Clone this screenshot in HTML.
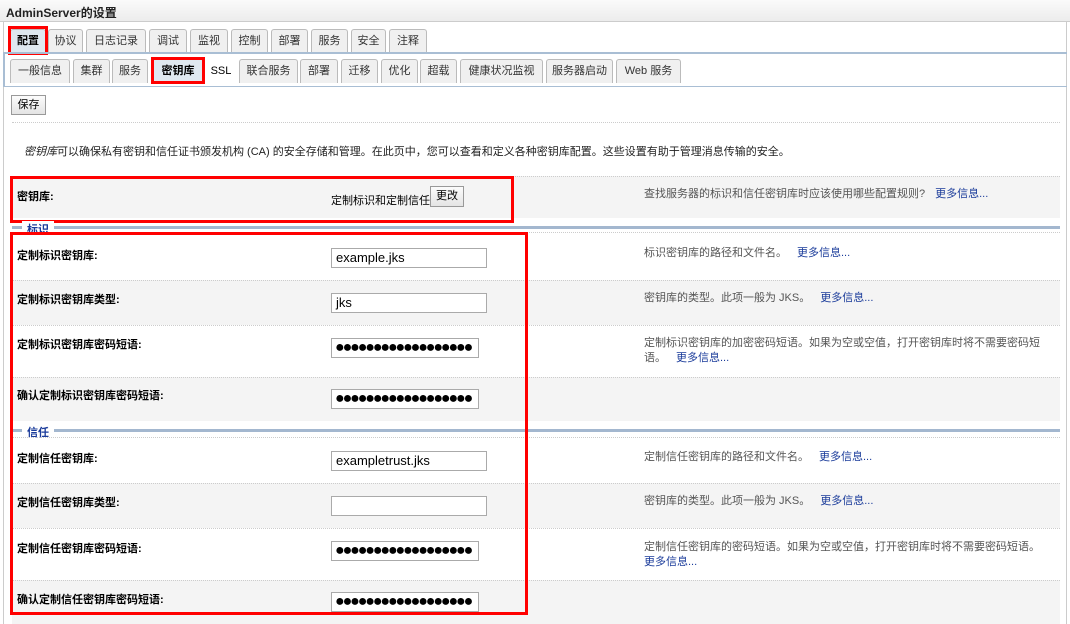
<!DOCTYPE html>
<html><head><meta charset="utf-8"><style>
*{margin:0;padding:0;box-sizing:border-box}
body{width:1070px;height:624px;overflow:hidden;background:#fff;font-family:"Liberation Sans","Noto Sans CJK SC",sans-serif;font-size:11px;color:#000;position:relative}
.a{position:absolute}
.title{left:0;top:0;width:1070px;height:22px;background:linear-gradient(#fafafa,#ececec);border-bottom:1px solid #ccc;font-weight:bold;font-size:12px;padding:4px 6px;color:#222}
.tab{position:absolute;height:24px;background:#f0f0f0;border:1px solid #bbb;border-bottom:none;border-radius:3px 3px 0 0;text-align:center;line-height:22px;font-size:11px;color:#333}
.sel{background:#dfe8f0;font-weight:bold;color:#000}
.red{position:absolute;border:3px solid #f00}
.row{position:absolute;left:12px;width:1048px;border-top:1px dotted #ccc}
.g{background:#f4f4f4}
.lbl{position:absolute;left:17px;font-weight:bold;font-size:11px}
.inp{position:absolute;left:331px;width:156px;height:20px;border:1px solid #aaa;background:#fff;font-size:13px;padding:1px 4px;line-height:16px;overflow:hidden;white-space:nowrap}
.pw{width:148px;font-size:16px;letter-spacing:-2.1px;padding:0 0 0 3px;line-height:18px}
.help{position:absolute;left:644px;color:#555;font-size:11px;line-height:15px;width:400px}
.help b{font-weight:normal;color:#1a3b9a;margin-left:10px}
.sec{position:absolute;left:12px;width:1048px;height:3px;background:#a3b7cf}
.sect{position:absolute;background:#fff;color:#1a3b9a;font-weight:bold;padding:0 5px;font-size:11px}
</style></head><body>
<div class="a title">AdminServer的设置</div>
<div class="a" style="left:3px;top:22px;width:1px;height:602px;background:#ccc"></div>
<div class="a" style="left:1066px;top:22px;width:1px;height:602px;background:#ccc"></div>

<div class="tab sel" style="left:10px;top:29px;width:36px">配置</div>
<div class="tab" style="left:48px;top:29px;width:35px">协议</div>
<div class="tab" style="left:86px;top:29px;width:60px">日志记录</div>
<div class="tab" style="left:149px;top:29px;width:38px">调试</div>
<div class="tab" style="left:190px;top:29px;width:38px">监视</div>
<div class="tab" style="left:231px;top:29px;width:37px">控制</div>
<div class="tab" style="left:271px;top:29px;width:37px">部署</div>
<div class="tab" style="left:311px;top:29px;width:37px">服务</div>
<div class="tab" style="left:351px;top:29px;width:35px">安全</div>
<div class="tab" style="left:389px;top:29px;width:38px">注释</div>
<div class="red" style="left:8px;top:26px;width:40px;height:29px"></div>

<div class="a" style="left:3px;top:52px;width:1064px;height:35px;border-top:2px solid #a9bed4;border-left:2px solid #a9bed4;border-bottom:1px solid #a9bed4"></div>
<div class="tab" style="left:10px;top:59px;width:60px">一般信息</div>
<div class="tab" style="left:73px;top:59px;width:37px">集群</div>
<div class="tab" style="left:112px;top:59px;width:36px">服务</div>
<div class="tab sel" style="left:152px;top:59px;width:52px">密钥库</div>
<div class="a" style="left:206px;top:65px;width:30px;text-align:center;font-size:11px">SSL</div>
<div class="tab" style="left:239px;top:59px;width:59px">联合服务</div>
<div class="tab" style="left:300px;top:59px;width:38px">部署</div>
<div class="tab" style="left:341px;top:59px;width:37px">迁移</div>
<div class="tab" style="left:381px;top:59px;width:37px">优化</div>
<div class="tab" style="left:420px;top:59px;width:37px">超载</div>
<div class="tab" style="left:460px;top:59px;width:83px">健康状况监视</div>
<div class="tab" style="left:546px;top:59px;width:67px">服务器启动</div>
<div class="tab" style="left:616px;top:59px;width:65px">Web 服务</div>
<div class="red" style="left:151px;top:57px;width:54px;height:27px"></div>

<div class="a" style="left:11px;top:95px;width:35px;height:20px;border:1px solid #999;background:linear-gradient(#fcfcfc,#e4e4e4);text-align:center;line-height:18px">保存</div>
<div class="a" style="left:12px;top:122px;width:1048px;border-top:1px dotted #ccc"></div>
<div class="a" style="left:24px;top:143px;font-size:11px;color:#222"><i>密钥库</i>可以确保私有密钥和信任证书颁发机构 (CA) 的安全存储和管理。在此页中，您可以查看和定义各种密钥库配置。这些设置有助于管理消息传输的安全。</div>

<div class="row g" style="top:176px;height:42px"></div>
<div class="lbl" style="top:188px">密钥库:</div>
<div class="a" style="left:331px;top:192px">定制标识和定制信任</div>
<div class="a" style="left:430px;top:186px;width:34px;height:21px;border:1px solid #999;background:linear-gradient(#fcfcfc,#e4e4e4);text-align:center;line-height:19px">更改</div>
<div class="help" style="top:187px">查找服务器的标识和信任密钥库时应该使用哪些配置规则?<b>更多信息...</b></div>
<div class="red" style="left:10px;top:176px;width:504px;height:47px"></div>

<div class="sec" style="top:226px"></div>
<div class="sect" style="left:22px;top:221px">标识</div>

<div class="row" style="top:232px;height:48px"></div>
<div class="lbl" style="top:247px">定制标识密钥库:</div>
<div class="inp" style="top:248px">example.jks</div>
<div class="help" style="top:246px">标识密钥库的路径和文件名。<b>更多信息...</b></div>

<div class="row g" style="top:280px;height:45px"></div>
<div class="lbl" style="top:291px">定制标识密钥库类型:</div>
<div class="inp" style="top:293px">jks</div>
<div class="help" style="top:291px">密钥库的类型。此项一般为 JKS。<b>更多信息...</b></div>

<div class="row" style="top:325px;height:52px"></div>
<div class="lbl" style="top:336px">定制标识密钥库密码短语:</div>
<div class="inp pw" style="top:338px">●●●●●●●●●●●●●●●●●●</div>
<div class="help" style="top:336px;width:400px">定制标识密钥库的加密密码短语。如果为空或空值，打开密钥库时将不需要密码短语。<b>更多信息...</b></div>

<div class="row g" style="top:377px;height:44px"></div>
<div class="lbl" style="top:387px">确认定制标识密钥库密码短语:</div>
<div class="inp pw" style="top:389px">●●●●●●●●●●●●●●●●●●</div>

<div class="sec" style="top:429px"></div>
<div class="sect" style="left:22px;top:424px">信任</div>

<div class="row" style="top:437px;height:46px"></div>
<div class="lbl" style="top:450px">定制信任密钥库:</div>
<div class="inp" style="top:451px">exampletrust.jks</div>
<div class="help" style="top:450px">定制信任密钥库的路径和文件名。<b>更多信息...</b></div>

<div class="row g" style="top:483px;height:45px"></div>
<div class="lbl" style="top:494px">定制信任密钥库类型:</div>
<div class="inp" style="top:496px"></div>
<div class="help" style="top:494px">密钥库的类型。此项一般为 JKS。<b>更多信息...</b></div>

<div class="row" style="top:528px;height:52px"></div>
<div class="lbl" style="top:540px">定制信任密钥库密码短语:</div>
<div class="inp pw" style="top:541px">●●●●●●●●●●●●●●●●●●</div>
<div class="help" style="top:540px;width:400px">定制信任密钥库的密码短语。如果为空或空值，打开密钥库时将不需要密码短语。<br><b style="margin-left:0">更多信息...</b></div>

<div class="row g" style="top:580px;height:44px"></div>
<div class="lbl" style="top:591px">确认定制信任密钥库密码短语:</div>
<div class="inp pw" style="top:592px">●●●●●●●●●●●●●●●●●●</div>

<div class="red" style="left:10px;top:232px;width:518px;height:383px"></div>
</body></html>
